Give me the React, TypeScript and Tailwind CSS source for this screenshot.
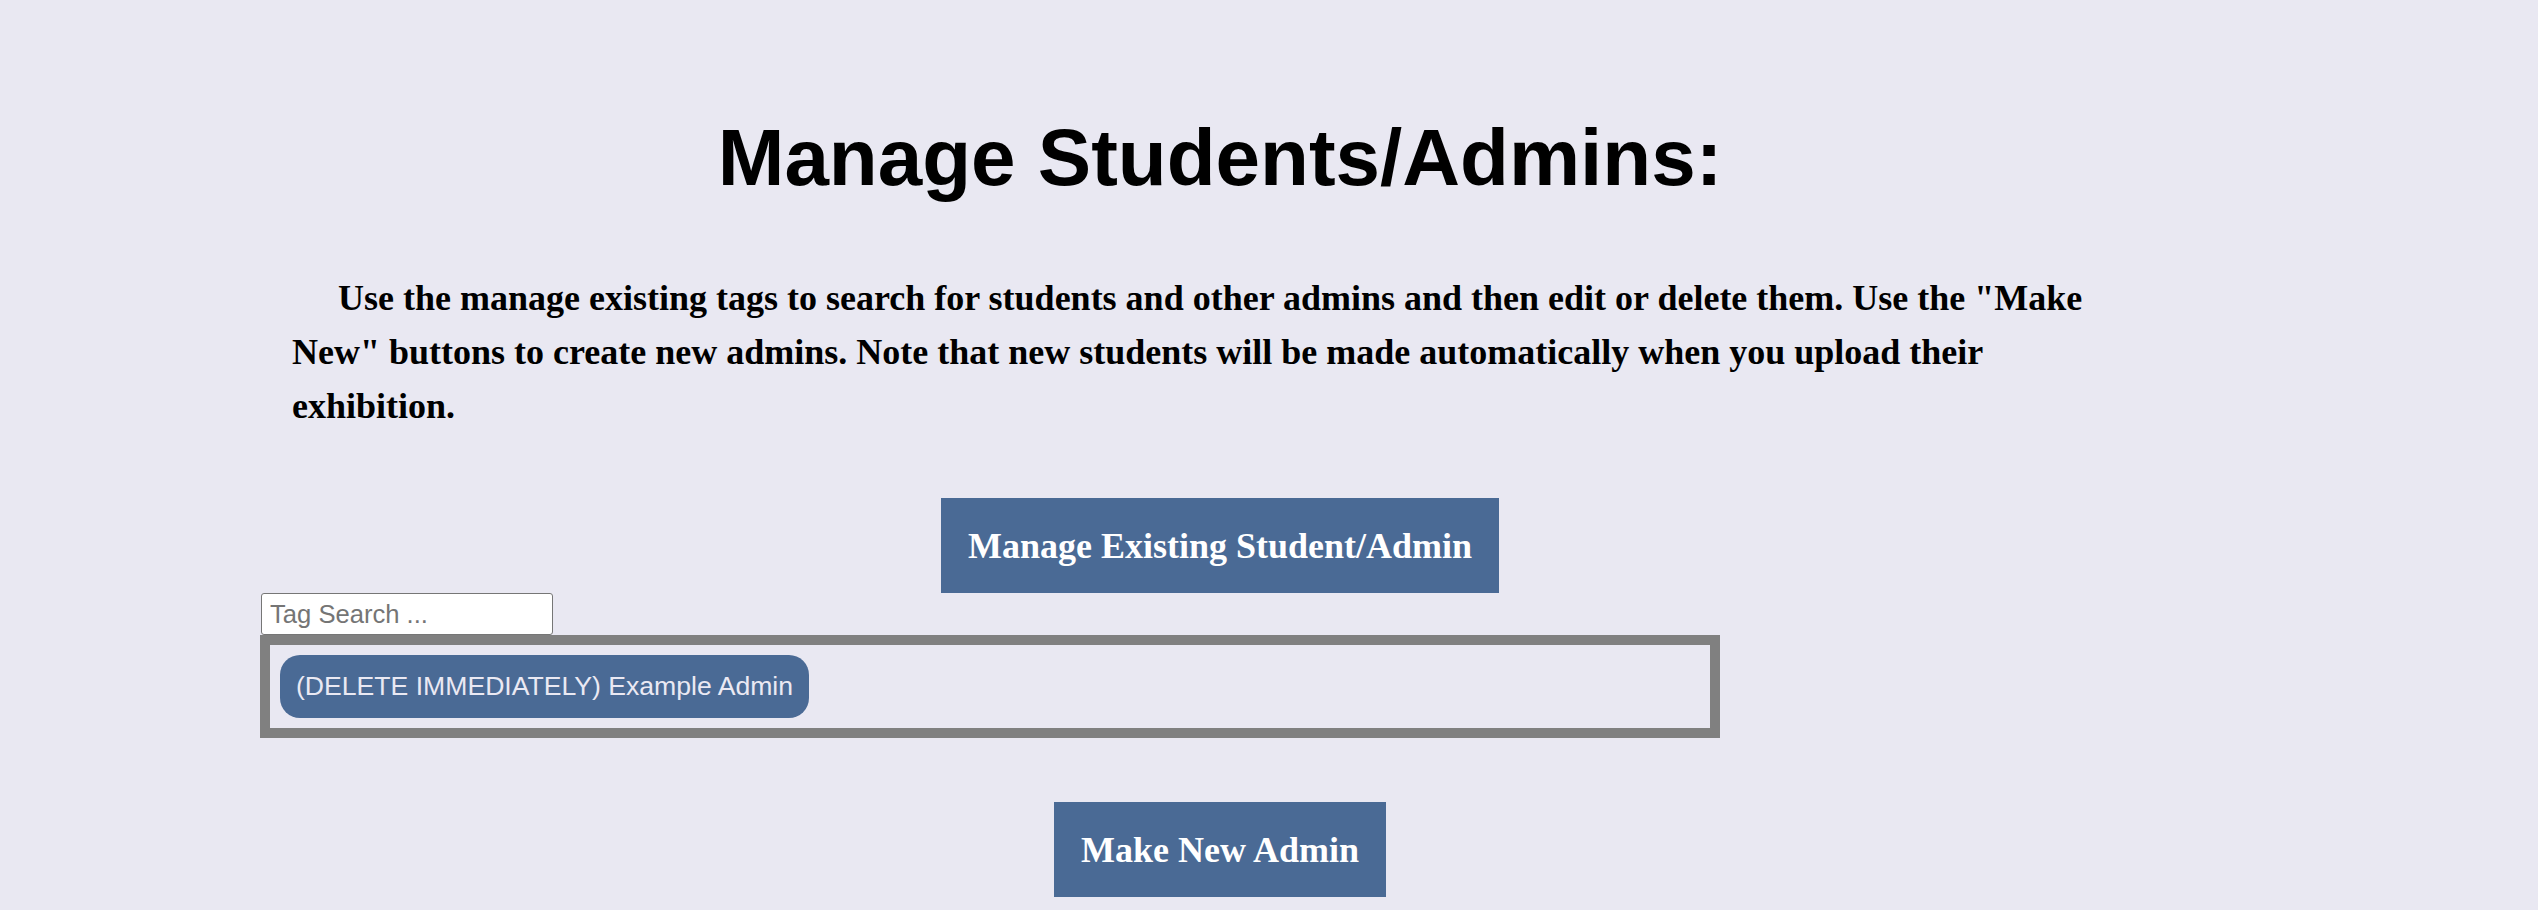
import React from 'react';

interface TagItem {
  label: string;
}

const tags: TagItem[] = [{ label: '(DELETE IMMEDIATELY) Example Admin' }];

function ActionButton({ label }: { label: string }) {
  return (
    <div className="flex justify-center">
      <button
        type="button"
        className="h-[95px] px-[27px] flex items-center justify-center bg-[#4a6a95] text-white text-[36px] font-bold font-['Liberation_Serif','Times_New_Roman',serif]"
      >
        {label}
      </button>
    </div>
  );
}

export default function App() {
  return (
    <div className="h-[910px] overflow-hidden bg-[#e9e8f2] text-black">
      <div className="ml-[260px] w-[1920px] flex flex-col">
        <h1 className="pt-[113px] text-center text-[80px] leading-[90px] font-bold font-['Liberation_Sans',Arial,sans-serif]">
          Manage Students/Admins:
        </h1>

        <p className="mt-[68px] pl-[32px] pr-[40px] indent-[46px] text-[36px] leading-[54px] font-bold font-['Liberation_Serif','Times_New_Roman',serif]">
          Use the manage existing tags to search for students and other admins and then edit or delete them. Use the
          "Make New" buttons to create new admins. Note that new students will be made automatically when you upload
          their exhibition.
        </p>

        <div className="mt-[65px]">
          <ActionButton label="Manage Existing Student/Admin" />
        </div>

        <input
          type="text"
          placeholder="Tag Search ..."
          className="ml-[1px] w-[292px] h-[42px] pl-[8px] bg-white border border-[#767676] rounded-[3px] text-[25.6px] font-['Liberation_Sans',Arial,sans-serif] placeholder:text-[#757575] outline-none"
        />

        <div className="w-[1460px] h-[103px] border-[10px] border-[#808080] p-[10px] flex gap-[10px]">
          {tags.map((tag, i) => (
            <button
              type="button"
              key={`tag_${i + 1}`}
              className="h-[63px] px-[16px] rounded-[20px] bg-[#4a6a95] text-[#eae9f3] text-[26.6px] font-['Liberation_Sans',Arial,sans-serif] whitespace-nowrap"
            >
              {tag.label}
            </button>
          ))}
        </div>

        <div className="mt-[64px]">
          <ActionButton label="Make New Admin" />
        </div>
      </div>
    </div>
  );
}
